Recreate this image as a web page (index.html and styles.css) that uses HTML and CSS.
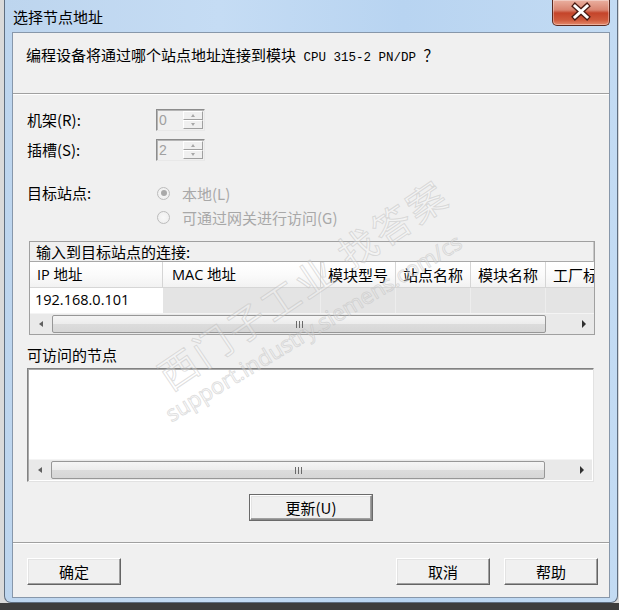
FILE: index.html
```html
<!DOCTYPE html>
<html>
<head>
<meta charset="utf-8">
<title>选择节点地址</title>
<link rel="stylesheet" href="styles.css">
</head>
<body>
<div class="window">
  <div class="titlebar">
    <span class="title">选择节点地址</span>
    <div class="close">
      <svg width="58" height="26" viewBox="0 0 58 26">
        <path d="M23 7 L35 18 M35 7 L23 18" stroke="#4a1a12" stroke-width="5.5" stroke-linecap="square" fill="none"/>
        <path d="M23 7 L35 18 M35 7 L23 18" stroke="#ffffff" stroke-width="3" stroke-linecap="square" fill="none"/>
      </svg>
    </div>
  </div>
  <div class="client">
    <div class="header">编程设备将通过哪个站点地址连接到模块<span class="mono"> CPU 315-2 PN/DP </span>？</div>

    <div class="form">
      <div class="row">
        <span class="lbl">机架(R):</span>
        <div class="spin"><span class="val">0</span><div class="btns"><span class="sbtn"><i class="tri-up"></i></span><span class="sbtn"><i class="tri-down"></i></span></div></div>
      </div>
      <div class="row">
        <span class="lbl">插槽(S):</span>
        <div class="spin"><span class="val">2</span><div class="btns"><span class="sbtn"><i class="tri-up"></i></span><span class="sbtn"><i class="tri-down"></i></span></div></div>
      </div>
      <div class="target">
        <span class="tlbl">目标站点:</span>
        <div class="radios">
          <div class="radio"><span class="dot checked"></span>本地(L)</div>
          <div class="radio"><span class="dot"></span>可通过网关进行访问(G)</div>
        </div>
      </div>
    </div>

    <div class="conn">
      <div class="caption">输入到目标站点的连接:</div>
      <div class="grid">
        <div class="hrow">
          <span class="c c1">IP 地址</span>
          <span class="c c2">MAC 地址</span>
          <span class="c c3">模块型号</span>
          <span class="c c3">站点名称</span>
          <span class="c c3">模块名称</span>
          <span class="c c6">工厂标</span>
        </div>
        <div class="drow">
          <span class="d c1 sel">192.168.0.101</span>
          <span class="d c2"></span>
          <span class="d c3"></span>
          <span class="d c3"></span>
          <span class="d c3"></span>
          <span class="d c6"></span>
        </div>
      </div>
      <div class="hscroll">
        <span class="arrow"><i class="tri-left"></i></span>
        <span class="thumb"><span class="grip"></span></span>
        <span class="track"></span>
        <span class="arrow"><i class="tri-right"></i></span>
      </div>
    </div>

    <div class="nodes-label">可访问的节点</div>
    <div class="listbox">
      <div class="list-body"></div>
      <div class="hscroll">
        <span class="arrow"><i class="tri-left"></i></span>
        <span class="thumb"><span class="grip"></span></span>
        <span class="track"></span>
        <span class="arrow"><i class="tri-right"></i></span>
      </div>
    </div>

    <div class="update-wrap"><button class="btn default">更新(U)</button></div>

    <div class="footer">
      <button class="btn wide">确定</button>
      <span class="spacer"></span>
      <button class="btn wide">取消</button>
      <button class="btn wide">帮助</button>
    </div>

    <div class="wm wm-cn">西门子工业 找答案</div>
    <div class="wm wm-url">support.industry.siemens.com/cs</div>
  </div>
</div>
</body>
</html>
```
FILE: styles.css
```css
* { box-sizing: border-box; margin: 0; padding: 0; }
html { background: linear-gradient(#dadada 0, #dadada 603px, #3d3d3d 603px); }
body {
  width: 619px; height: 610px; overflow: hidden;
  font-family: "Noto Sans CJK SC", "Noto Sans", sans-serif;
  font-size: 15px; color: #000;
}
.window {
  margin-left: 4px; width: 614px; height: 603px;
  border: 1px solid #5f6e80; border-top: none;
  border-radius: 0 0 7px 7px;
  background: linear-gradient(90deg, #bdd5ee 0%, #c5dcf4 35%, #b8d4f1 65%, #c3dbf3 100%);
  display: flex; flex-direction: column;
}
.titlebar {
  height: 32px; flex: none;
  display: flex; justify-content: space-between; align-items: flex-start;
  padding-left: 8px; padding-right: 7px;
}
.title { margin-top: 7px; line-height: 20px; font-size: 15px; color: #000; }
.close {
  width: 58px; height: 26px;
  border: 1px solid #5b2a20; border-top: none;
  border-radius: 0 0 5px 5px;
  background: linear-gradient(#eab0a0 0%, #d98470 40%, #c4442a 52%, #cf5a3c 80%, #e48a6c 100%);
  box-shadow: inset 0 0 0 1px rgba(255,255,255,0.35);
}
.close svg { display: block; margin-top: -1px; margin-left: -1px; }
.client {
  flex: none; position: relative; overflow: hidden;
  margin: 0 7px 4px 7px; height: 566px;
  border: 1px solid #8797aa;
  background: #f0f0f0;
}
.header {
  height: 61px; padding: 12px 0 0 13px; line-height: 20px;
  border-bottom: 1px solid #a0a0a0;
  box-shadow: 0 1px 0 #ffffff;
}
.mono { font-family: "Liberation Mono", monospace; font-size: 12.5px; }

.form { padding: 14px 0 0 14px; display: flex; flex-direction: column; }
.row {
  display: grid; grid-template-columns: 129px auto;
  align-items: center; height: 23px; margin-bottom: 7px;
}
.row .lbl { line-height: 23px; }
.spin {
  width: 49px; height: 22px;
  border: 1px solid; border-color: #8c8c8c #e8e8e8 #e8e8e8 #8c8c8c;
  box-shadow: inset 1px 1px 0 #b5b5b5;
  background: #f0f0f0;
  display: flex; justify-content: space-between; align-items: stretch;
  padding: 1px 1px 1px 1px;
}
.spin .val { color: #a0a0a0; line-height: 18px; font-family: "Liberation Sans", sans-serif; font-size: 14px; padding-left: 1px; }
.btns { width: 20px; display: flex; flex-direction: column; }
.sbtn {
  flex: 1; display: flex; align-items: center; justify-content: center;
  border: 1px solid; border-color: #ffffff #a0a0a0 #a0a0a0 #ffffff;
  background: #f0f0f0;
}
.tri-up { width: 0; height: 0; border-left: 2.5px solid transparent; border-right: 2.5px solid transparent; border-bottom: 3px solid #a8a8a8; }
.tri-down { width: 0; height: 0; border-left: 2.5px solid transparent; border-right: 2.5px solid transparent; border-top: 3px solid #a8a8a8; }

.target {
  display: grid; grid-template-columns: 130px auto;
  margin-top: 13px;
}
.tlbl { line-height: 24px; }
.radio {
  height: 24px; display: flex; align-items: center;
  color: #a8a8a8;
}
.dot {
  width: 13px; height: 13px; border-radius: 50%;
  border: 1px solid #bcbcbc;
  background: radial-gradient(circle, #f8f8f8 0, #ececec 100%);
  margin-right: 12px; position: relative;
}
.dot.checked::after {
  content: ""; position: absolute; left: 2.5px; top: 2.5px;
  width: 6px; height: 6px; border-radius: 50%;
  background: #a9a9a9;
}

.conn {
  margin: 12px 0 0 16px; width: 566px;
  border: 1px solid #a0a0a0; overflow: hidden;
}
.caption {
  height: 20px; line-height: 19px; padding-left: 6px;
  border-bottom: 1px solid #a8a8a8;
  border-right: 1px solid #c8c8c8;
  background: #f0f0f0;
}
.grid { width: 700px; }
.hrow {
  display: flex; height: 26px;
  border-bottom: 1px solid #d6d6d6;
  background: linear-gradient(#ffffff 0%, #fbfbfb 50%, #f2f2f2 100%);
}
.c { line-height: 25px; padding-left: 7px; border-right: 1px solid #d5d5d5; white-space: nowrap; overflow: hidden; }
.c1 { width: 133px; }
.c2 { width: 158px; padding-left: 9px; font-family: "Open Sans", "Noto Sans CJK SC", sans-serif; font-size: 14.5px; }
.c1 { font-family: "Open Sans", "Noto Sans CJK SC", sans-serif; font-size: 14.5px; }
.c3 { width: 75px; padding-left: 7px; }
.c6 { width: 120px; }
.drow { display: flex; height: 25px; }
.d { height: 25px; background: #e4e4e4; border-right: 1px solid #ededed; }
.d.sel { background: #ffffff; line-height: 24px; padding-left: 5px; font-family: "Open Sans", sans-serif; font-size: 14.5px; border-right: none; width: 133px; }

.hscroll {
  display: flex; height: 21px; background: #e9e9e9;
  border-top: 1px solid #f4f4f4;
}
.hscroll .arrow { width: 21px; display: flex; align-items: center; justify-content: center; }
.tri-left { width: 0; height: 0; border-top: 3.5px solid transparent; border-bottom: 3.5px solid transparent; border-right: 4px solid #606060; }
.tri-right { width: 0; height: 0; border-top: 4px solid transparent; border-bottom: 4px solid transparent; border-left: 4px solid #303030; }
.hscroll .thumb {
  width: 494px; margin: 1px 0 1px 1px;
  border: 1px solid #979797; border-radius: 2px;
  background: linear-gradient(#f5f5f5 0%, #ececec 50%, #dcdcdc 51%, #d6d6d6 100%);
  display: flex; align-items: center; justify-content: center;
}
.grip {
  width: 7px; height: 7px;
  background: repeating-linear-gradient(90deg, #6a6a6a 0, #6a6a6a 1px, transparent 1px, transparent 3px);
}
.hscroll .track { flex: 1; }

.nodes-label { margin: 10px 0 0 14px; line-height: 20px; }
.listbox {
  margin: 3px 0 0 14px; width: 567px; height: 114px;
  border: 1px solid; border-color: #828282 #e2e2e2 #e2e2e2 #828282;
  box-shadow: inset 1px 1px 0 #a8a8a8;
  background: #ffffff;
  display: flex; flex-direction: column;
}
.list-body { flex: 1; }
.listbox .hscroll { margin: 0 1px 1px 1px; }

.update-wrap { display: flex; justify-content: center; margin-top: 13px; }
.btn {
  font-family: "Noto Sans CJK SC", sans-serif; font-size: 15px; color: #000;
  height: 26px; line-height: 22px;
  background: #f0f0f0;
  border: 1px solid; border-color: #ffffff #646464 #646464 #ffffff;
  box-shadow: inset -1px -1px 0 #a0a0a0, inset 1px 1px 0 #e3e3e3;
}
.btn.default {
  width: 122px; height: 25px;
  outline: 1px solid #6a6a6a; outline-offset: 0;
  border-color: #ffffff #8a8a8a #8a8a8a #ffffff;
}
.footer {
  margin-top: 22px; border-top: 1px solid #a0a0a0;
  box-shadow: inset 0 1px 0 #ffffff;
  display: flex; padding: 15px 11px 0 14px; gap: 14px;
}
.btn.wide { width: 94px; height: 27px; }
.spacer { flex: 1; }

.wm {
  position: absolute; white-space: nowrap;
  color: rgba(255,255,255,0.25);
  -webkit-text-stroke: 1px rgba(185,185,185,0.45);
  transform-origin: 0 100%;
  pointer-events: none;
}
.wm-cn { left: 160px; top: 322px; font-size: 38px; line-height: 40px; letter-spacing: 3px; transform: rotate(-34deg); }
.wm-url { left: 160px; top: 368px; font-size: 22px; line-height: 24px; font-family: "Open Sans", sans-serif; transform: rotate(-31deg); }
```
